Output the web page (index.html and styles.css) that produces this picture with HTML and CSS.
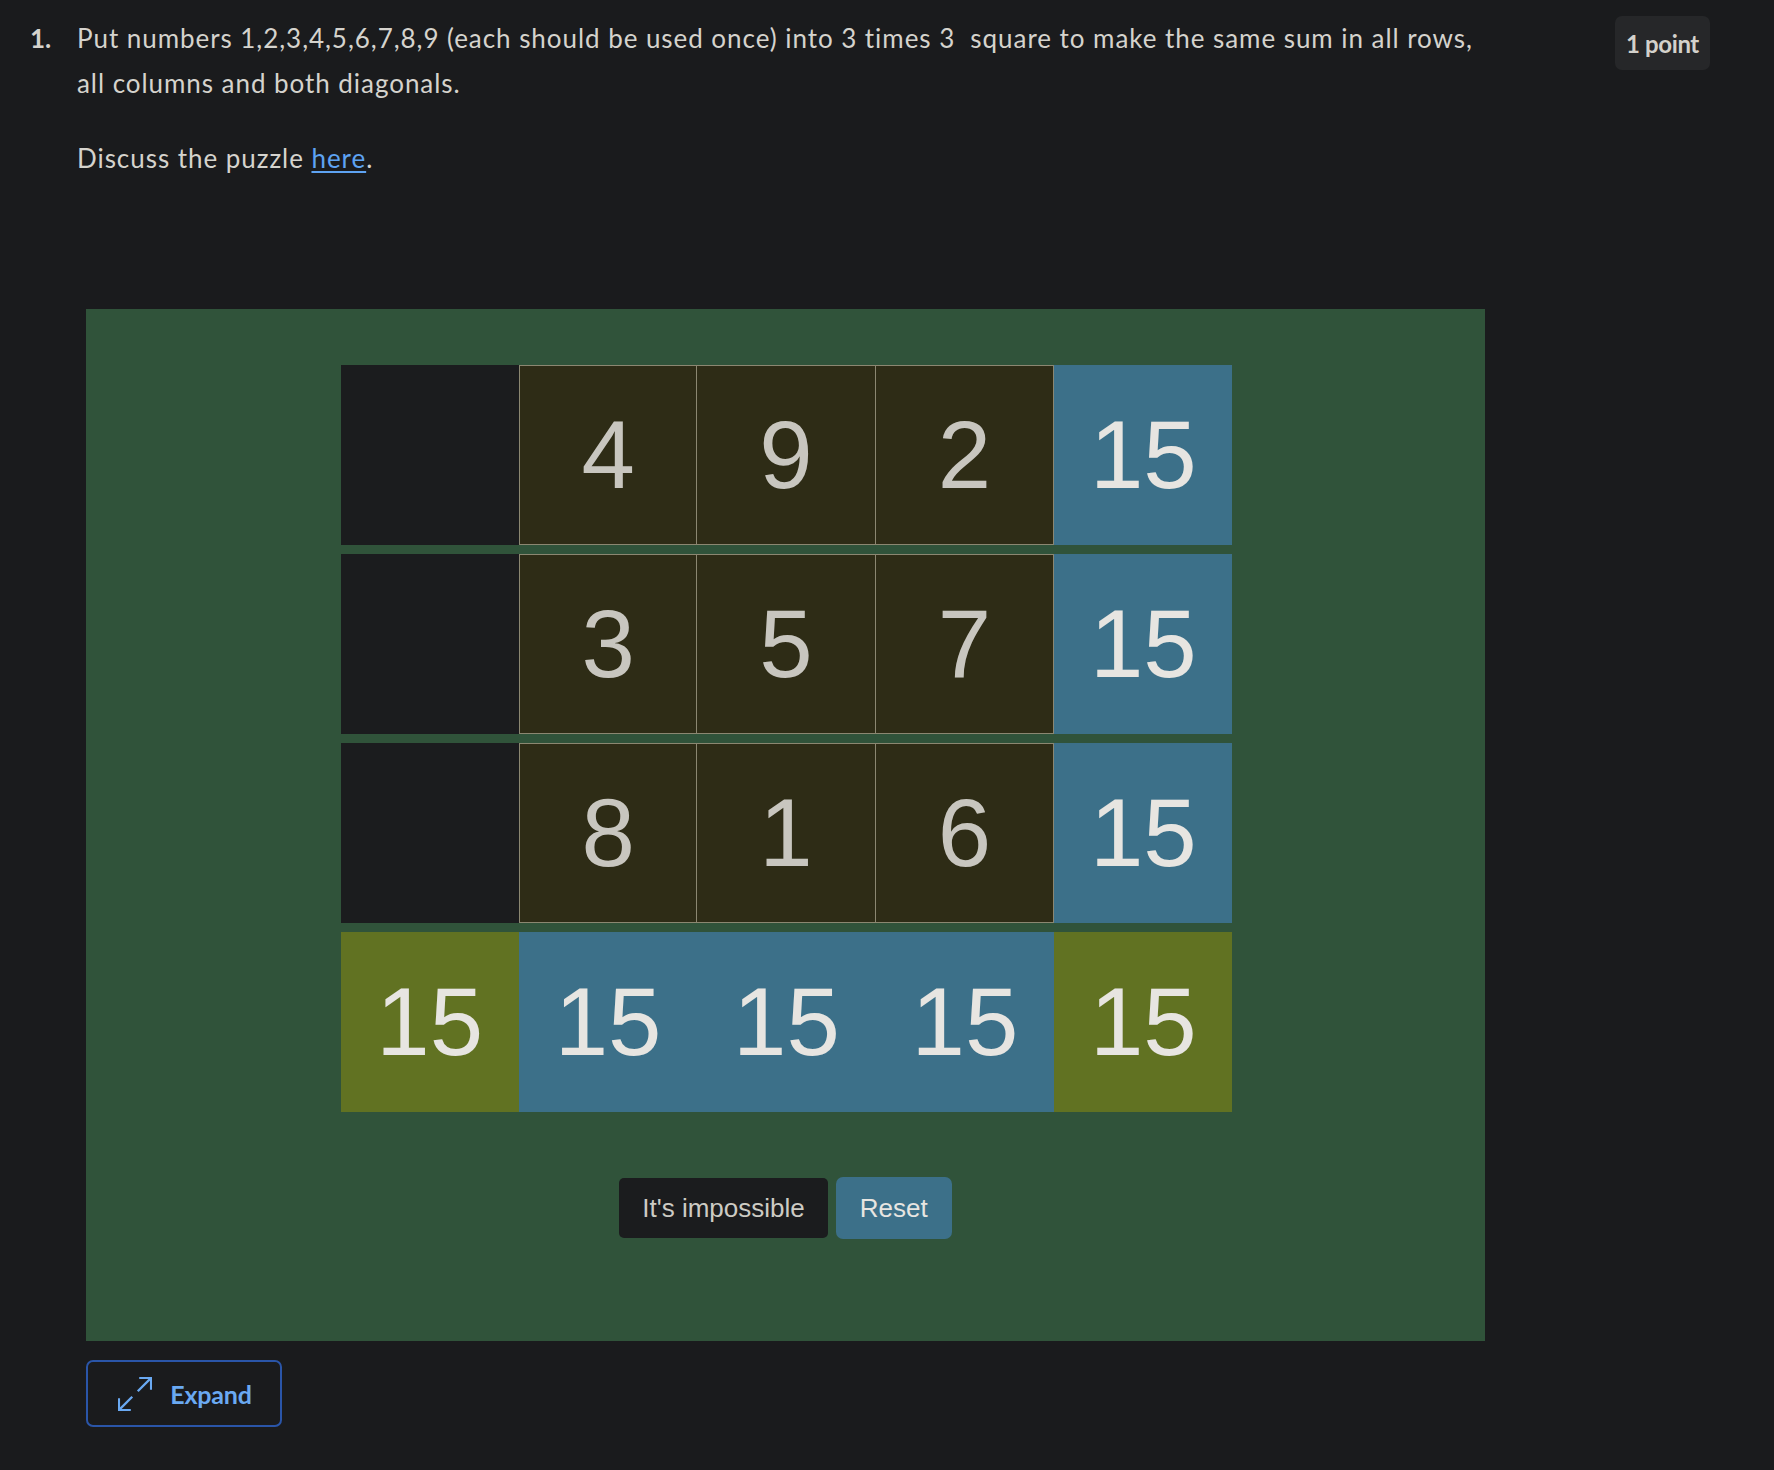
FILE: index.html
```html
<!DOCTYPE html>
<html lang="en">
<head>
<meta charset="utf-8">
<title>Magic square puzzle</title>
<link rel="stylesheet" href="styles.css">
</head>
<body>
<div class="question">
  <div class="qnum">1.</div>
  <div class="qbody">
    <p class="qtext">Put numbers 1,2,3,4,5,6,7,8,9 (each should be used once) into 3 times 3&nbsp; square to make the same sum in all rows, all columns and both diagonals.</p>
    <p class="qtext">Discuss the puzzle <a href="#" class="link">here</a>.</p>
  </div>
  <div class="badge">1 point</div>
</div>

<div class="widget">
  <div class="grid">
    <div class="cell empty"></div>
    <div class="cell num">4</div>
    <div class="cell num mid">9</div>
    <div class="cell num mid">2</div>
    <div class="cell sum blue">15</div>

    <div class="cell empty"></div>
    <div class="cell num">3</div>
    <div class="cell num mid">5</div>
    <div class="cell num mid">7</div>
    <div class="cell sum blue">15</div>

    <div class="cell empty"></div>
    <div class="cell num">8</div>
    <div class="cell num mid">1</div>
    <div class="cell num mid">6</div>
    <div class="cell sum blue">15</div>

    <div class="cell sum olive">15</div>
    <div class="cell sum blue">15</div>
    <div class="cell sum blue">15</div>
    <div class="cell sum blue">15</div>
    <div class="cell sum olive">15</div>
  </div>
  <div class="actions">
    <button class="btn btn-dark">It's impossible</button>
    <button class="btn btn-blue">Reset</button>
  </div>
</div>

<button class="expand">
  <svg class="expand-icon" viewBox="2.5 2.5 19 19" width="34" height="34" fill="none" stroke="currentColor" stroke-width="1.3" stroke-linecap="square">
    <path d="M15 3h6v6"/>
    <path d="M21 3l-7 7"/>
    <path d="M3 21l7-7"/>
    <path d="M9 21H3v-6"/>
  </svg>
  <span>Expand</span>
</button>
</body>
</html>
```

FILE: styles.css
```css
html, body {
  margin: 0;
  padding: 0;
}

body {
  background: #1a1b1d;
  color: #d5d3cd;
  font-family: "Lato", "Open Sans", sans-serif;
  width: 1774px;
  min-height: 1470px;
}

.question {
  display: flex;
  align-items: flex-start;
  padding: 16px 0 0 0;
}

.qnum {
  padding-left: 30px;
  box-sizing: border-box;
  width: 77px;
  font-weight: 700;
  font-size: 26px;
  line-height: 45px;
}

.qbody {
  width: 1430px;
}

.qtext {
  margin: 0 0 30px 0;
  font-size: 26px;
  line-height: 45px;
  letter-spacing: 0.95px;
}

.link {
  color: #5ea3f2;
  text-decoration: underline;
  text-underline-offset: 3px;
}

.badge {
  margin-left: 108px;
  margin-top: 0;
  background: #262729;
  border-radius: 7px;
  width: 95px;
  height: 54px;
  display: flex;
  align-items: center;
  justify-content: center;
  font-weight: 700;
  font-size: 24px;
  letter-spacing: -0.4px;
  color: #d3d1cb;
}

.widget {
  margin: 98px 0 0 86px;
  width: 1399px;
  background: #30533a;
  padding: 56px 0 102px 0;
  box-sizing: border-box;
}

.grid {
  width: 892px;
  margin: 0 auto;
  display: grid;
  grid-template-columns: repeat(5, 1fr);
  grid-auto-rows: 180px;
  row-gap: 9px;
  transform: translateX(1px);
}

.cell {
  display: flex;
  align-items: center;
  justify-content: center;
  font-family: "Liberation Sans", Arial, sans-serif;
  font-size: 96px;
  line-height: 1;
}

.empty {
  background: #1b1c1e;
}

.num {
  background: #2e2c16;
  border: 1px solid #8b8771;
  color: #c8c6bf;
}

.num.mid {
  border-left: none;
}

.sum {
  color: #e7e5e1;
}

.blue {
  background: #3c7089;
}

.olive {
  background: #617222;
}

.actions {
  margin-top: 65px;
  display: flex;
  justify-content: center;
  align-items: center;
  gap: 8px;
}

.btn {
  font-family: "Liberation Sans", Arial, sans-serif;
  font-size: 26px;
  border: none;
  border-radius: 5px;
  padding: 0 23px;
  cursor: pointer;
}

.btn-dark {
  background: #1b1c1e;
  color: #cdcbc4;
  height: 60px;
}

.btn-blue {
  background: #3c7089;
  color: #e7e5e1;
  height: 62px;
  padding: 0 24px;
  border-radius: 7px;
}

.expand {
  margin: 19px 0 0 86px;
  width: 196px;
  height: 67px;
  background: transparent;
  border: 2px solid #2a55a8;
  border-radius: 7px;
  display: flex;
  align-items: center;
  justify-content: center;
  gap: 18px;
  padding: 0 0 0 2px;
  color: #6aa9f2;
  font-family: "Lato", "Open Sans", sans-serif;
  font-weight: 700;
  font-size: 25px;
  letter-spacing: -0.2px;
  cursor: pointer;
}

.expand-icon {
  display: block;
}
```
